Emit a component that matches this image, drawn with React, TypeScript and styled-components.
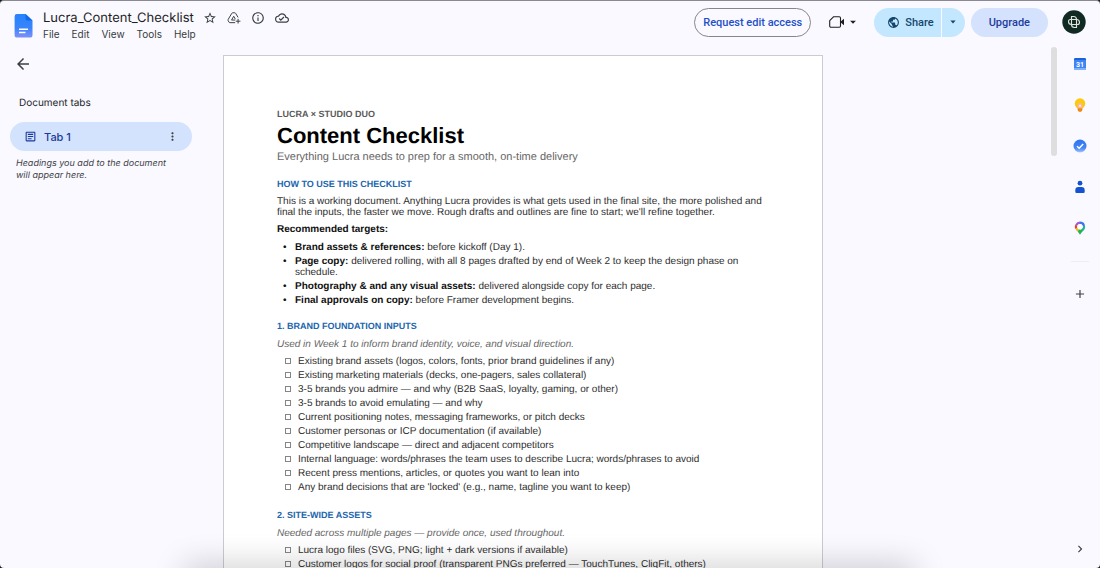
import React from "react";
import styled, { createGlobalStyle } from "styled-components";
import {
  MdAdd,
  MdArrowBack,
  MdArrowDropDown,
  MdChevronRight,
  MdMoreVert,
  MdOutlineArticle,
  MdOutlineCloudDone,
  MdOutlineInfo,
  MdPublic,
  MdStarBorder,
} from "react-icons/md";

const ui = `Inter, Roboto, "Liberation Sans", sans-serif`;
const control = `Roboto, Inter, sans-serif`;

const GlobalStyle = createGlobalStyle`
  * { box-sizing: border-box; }
  body { margin: 0; background: #17171a; }
  button { font: inherit; color: inherit; background: none; border: 0; padding: 0; cursor: pointer; }
  h1, h2, p, ul { margin: 0; padding: 0; }
`;

const Window = styled.div`
  position: relative;
  display: flex;
  flex-direction: column;
  height: 100vh;
  overflow: hidden;
  border-top: 1px solid #8b8a92;
  border-radius: 4px;
  background: #f9f9ff;
  color: #2b2d31;
  font-family: ${ui};
  text-rendering: geometricPrecision;
`;

const Header = styled.header`
  display: flex;
  align-items: center;
  flex: none;
  height: 42px;
  padding: 0 14px;
`;

const Logo = styled.a`
  margin-top: 6px;
  svg { display: block; }
`;

const TitleBlock = styled.div`
  display: flex;
  flex-direction: column;
  flex: 1;
  margin: 6px 0 0 10px;
`;

const TitleRow = styled.div`
  display: flex;
  align-items: center;
  height: 18px;
`;

const FileName = styled.span`
  font-size: 13px;
  line-height: 18px;
  color: #1f1f1f;
`;

const TitleActions = styled.div`
  display: flex;
  gap: 10px;
  margin-left: 9px;
`;

const IconButton = styled.button<{ $size?: number }>`
  display: flex;
  align-items: center;
  justify-content: center;
  width: ${(p) => p.$size ?? 14}px;
  height: ${(p) => p.$size ?? 14}px;
  color: #3c4043;
  svg { display: block; width: 100%; height: 100%; }
`;

const Menu = styled.nav`
  display: flex;
  gap: 12px;
  height: 15px;
  font-size: 10px;
  line-height: 15px;
  color: #3a3c40;
`;

const Actions = styled.div`
  display: flex;
  align-items: center;
  font-family: ${control};
`;

const Pill = styled.button<{ $tone: "outline" | "soft" }>`
  height: 29px;
  padding: 0 ${(p) => (p.$tone === "outline" ? 8 : 18)}px;
  border-radius: 15px;
  border: ${(p) => (p.$tone === "outline" ? "1px solid #85868c" : "0")};
  background: ${(p) => (p.$tone === "outline" ? "transparent" : "#d5e2fd")};
  color: ${(p) => (p.$tone === "outline" ? "#1f50c8" : "#1c3d9c")};
  font-size: 11px;
  font-weight: 500;
  white-space: nowrap;
`;

const MeetButton = styled.button`
  display: flex;
  align-items: center;
  gap: 1px;
  margin: 0 14px 0 18px;
  color: #1f1f1f;
`;

const ShareGroup = styled.div`
  display: flex;
  gap: 1px;
  height: 29px;
  margin-right: 6px;
  color: #14466e;
`;

const ShareMain = styled.button`
  display: flex;
  align-items: center;
  gap: 5px;
  padding: 0 7px 0 13px;
  border-radius: 15px 0 0 15px;
  background: #c3e7fe;
  font-size: 11px;
  font-weight: 500;
`;

const ShareMore = styled.button`
  display: flex;
  align-items: center;
  justify-content: center;
  width: 23px;
  border-radius: 0 15px 15px 0;
  background: #c3e7fe;
`;

const Avatar = styled.button`
  width: 24px;
  height: 24px;
  margin-left: 14px;
  svg { display: block; }
`;

const Main = styled.main`
  display: grid;
  grid-template-columns: minmax(0, 1fr) minmax(0, 600px) minmax(0, 1fr) 54px;
  flex: 1;
  min-height: 0;
`;

const Sidebar = styled.aside`
  padding: 12px 31px 0 10px;
`;

const BackRow = styled.div`
  padding-left: 4px;
`;

const SideTitle = styled.h2`
  margin: 23px 9px 12px;
  font-size: 10px;
  font-weight: 400;
  line-height: 14px;
  color: #24262a;
`;

const TabRow = styled.div`
  display: flex;
  align-items: center;
  height: 29px;
  padding: 0 13px 0 14px;
  border-radius: 15px;
  background: #d3e3fd;
`;

const TabButton = styled.button`
  display: flex;
  align-items: center;
  flex: 1;
  gap: 7px;
  font-size: 11px;
  font-weight: 500;
  color: #1b3a9a;
`;

const Hint = styled.p`
  margin: 7px 16px 0 6px;
  font-size: 9px;
  font-style: italic;
  line-height: 12px;
  color: #3f4146;
`;

const Page = styled.article`
  margin-top: 12px;
  padding: 52px 53px 0;
  overflow: hidden;
  border: 1px solid #cbccd3;
  border-bottom: 0;
  background: #ffffff;
  color: #2e2e2e;
  font-family: "Liberation Sans", Arial, sans-serif;
  font-size: 10px;
  line-height: 11px;
`;

const Eyebrow = styled.p`
  font-size: 9px;
  font-weight: 700;
  line-height: 12px;
  color: #5a5a5a;
`;

const DocTitle = styled.h1`
  margin-top: 3px;
  font-size: 22px;
  line-height: 26px;
  color: #000000;
`;

const Subtitle = styled.p`
  margin-top: 2px;
  font-size: 11px;
  line-height: 13px;
  color: #666666;
`;

const SectionTitle = styled.h2`
  margin-top: 14px;
  font-size: 9px;
  line-height: 12px;
  color: #2166ae;
`;

const Intro = styled.p`
  margin-top: 6px;
`;

const Lead = styled.p`
  margin-top: 6px;
  font-weight: 700;
  color: #111111;
`;

const Note = styled.p`
  margin-top: 7px;
  font-style: italic;
  line-height: 12px;
  color: #666666;
`;

const Bullets = styled.ul`
  margin-top: 7px;
  list-style: none;
`;

const Bullet = styled.li`
  display: flex;
  margin-bottom: 3px;
  padding-left: 6px;
  &::before { content: "•"; flex: none; width: 12px; color: #111111; }
  b { color: #111111; }
`;

const Checks = styled.ul`
  margin-top: 3px;
  padding: 0 0 1px 8px;
  list-style: none;
`;

const CheckLabel = styled.label`
  display: flex;
  align-items: center;
  gap: 7px;
  height: 14px;
  white-space: nowrap;
`;

const Box = styled.input`
  appearance: none;
  width: 6px;
  height: 6px;
  margin: 0;
  border: 1px solid #858585;
  &:checked { background: #2166ae; }
`;

const Rail = styled.div`
  grid-column: 4;
  display: flex;
  justify-content: space-between;
  padding: 4px 11px 12px 5px;
`;

const ScrollThumb = styled.div`
  width: 6px;
  height: 109px;
  border-radius: 3px;
  background: #dededf;
`;

const Apps = styled.nav`
  display: flex;
  flex-direction: column;
  align-items: center;
  gap: 27px;
  padding-top: 10px;
`;

const Divider = styled.hr`
  width: 18px;
  margin: -1px 0 -2px;
  border: 0;
  border-top: 1px solid #ededf3;
`;

const RailEnd = styled.div`
  margin-top: auto;
`;

const DockShadow = styled.div`
  position: absolute;
  left: 17%;
  right: 17%;
  top: 100%;
  height: 20px;
  box-shadow: 0 0 32px 2px rgba(0, 0, 0, 0.22);
  pointer-events: none;
`;

const DocsLogo = () => (
  <svg width="19" height="25" viewBox="0 0 19 25">
    <defs>
      <linearGradient id="docs" x1="0" y1="0" x2="0" y2="1">
        <stop offset="0" stopColor="#2483fd" />
        <stop offset=".6" stopColor="#3b84fb" />
        <stop offset="1" stopColor="#8090f8" />
      </linearGradient>
    </defs>
    <path d="M3 1h8.600L18.500 7.500V22a2.600 2.600 0 0 1-2.600 2.600H3.200A2.600 2.600 0 0 1 .600 22V3.400A2.400 2.400 0 0 1 3 1z" fill="url(#docs)" />
    <path d="M11.600 1l6.900 6.500h-5a1.900 1.900 0 0 1-1.900-1.900z" fill="#1268e8" />
    <path d="M5 16.200h9M5 19.600h6.500" stroke="#fff" strokeWidth="1.500" />
  </svg>
);

const DriveShortcutIcon = () => (
  <svg viewBox="0 0 24 24" fill="none" stroke="currentColor" strokeWidth="1.700" strokeLinejoin="round">
    <path d="M14 20H5a2 2 0 0 1-1.700-1L2 16.500a2 2 0 0 1 0-2L8.200 4a2 2 0 0 1 1.700-1h3.200a2 2 0 0 1 1.700 1l4.200 7" />
    <path d="M14 15.500H7.800l3.700-6.500 2.800 5" />
    <path d="M19 13.500v8M15 17.500h8" />
  </svg>
);

const CameraIcon = () => (
  <svg width="16" height="14" viewBox="0 0 16 14" fill="none">
    <path d="M4.700 1.700h5.600a1.200 1.200 0 0 1 1.200 1.200v8.200a1.200 1.200 0 0 1-1.200 1.200H1.900A1.200 1.200 0 0 1 .700 11.100V5.700z" stroke="currentColor" strokeWidth="1.100" strokeLinejoin="round" />
    <path d="M12 6.200L15 3.800v6.400l-3-2.400z" fill="currentColor" />
  </svg>
);

const CaretIcon = () => (
  <svg width="6" height="4" viewBox="0 0 6 4">
    <path d="M.400.500h5.200L3 3.400z" fill="currentColor" />
  </svg>
);

const AvatarIcon = () => (
  <svg width="24" height="24" viewBox="0 0 24 24" fill="none">
    <circle cx="12" cy="12" r="11.700" fill="#122b22" />
    <g stroke="#dfe6e1" strokeWidth="1.100">
      <path d="M9.500 6.500h2a3 3 0 0 1 3 3v5h-5a3 3 0 0 1-3-3v0a2 2 0 0 1 2-2h1z" />
      <path d="M14.500 17.500h-2a3 3 0 0 1-3-3v-5h5a3 3 0 0 1 3 3v0a2 2 0 0 1-2 2h-1z" />
      <path d="M9.500 6.500v3M14.500 14.500v3" />
    </g>
  </svg>
);

const CalendarIcon = () => (
  <svg viewBox="0 0 14 14">
    <rect x="1" y="1" width="12" height="12" rx="1.500" fill="#3f83f5" />
    <path d="M1 3V2.500A1.500 1.500 0 0 1 2.500 1h9A1.500 1.500 0 0 1 13 2.500V3z" fill="#1b62d8" />
    <path d="M1 11h12v.500a1.500 1.500 0 0 1-1.500 1.500h-9A1.500 1.500 0 0 1 1 11.500z" fill="#7db2fb" />
    <text x="7" y="9.800" textAnchor="middle" fontSize="7" fontWeight="700" fontFamily="Roboto, sans-serif" fill="#fff">31</text>
  </svg>
);

const KeepIcon = () => (
  <svg viewBox="0 0 14 14">
    <circle cx="7" cy="5.500" r="5.200" fill="#fdc90a" />
    <path d="M4.600 8a2.500 2.500 0 1 1 4.800 0v2.500H4.600z" fill="#f8b6a1" />
    <circle cx="7" cy="7.800" r="1" fill="#fff3e8" />
    <path d="M4.600 10.300h4.800v1.200a2.400 2.400 0 0 1-4.800 0z" fill="#ee8a16" />
  </svg>
);

const TasksIcon = () => (
  <svg viewBox="0 0 14 14">
    <defs>
      <linearGradient id="tasks" x1="0" y1="0" x2="0" y2="1">
        <stop offset="0" stopColor="#2f74ee" />
        <stop offset=".65" stopColor="#4585f5" />
        <stop offset="1" stopColor="#a9c2fb" />
      </linearGradient>
    </defs>
    <circle cx="7" cy="7" r="6.500" fill="url(#tasks)" />
    <path d="M4 7.200l2.200 2.100 4-4.300" fill="none" stroke="#fff" strokeWidth="1.400" />
  </svg>
);

const ContactsIcon = () => (
  <svg viewBox="0 0 14 14" fill="#1552cf">
    <circle cx="7" cy="3.200" r="2.400" />
    <path d="M2.300 10.200A3.200 3.200 0 0 1 5.500 7h3a3.200 3.200 0 0 1 3.200 3.200v1.500a1.300 1.300 0 0 1-1.300 1.300H3.600a1.300 1.300 0 0 1-1.300-1.300z" />
  </svg>
);

const MapsIcon = () => (
  <svg viewBox="0 0 14 14" fill="none" strokeWidth="2.400">
    <path d="M7 13.800L3.300 8.500 7 9.500l3.700-1z" fill="#22b455" />
    <path d="M3.400 7.500A4 4 0 0 1 3.400 4" stroke="#e8433a" />
    <path d="M3.400 4A4 4 0 0 1 7 1.800" stroke="#a35bd6" />
    <path d="M7 1.800A4 4 0 0 1 10.900 5" stroke="#3979f2" />
    <path d="M10.900 5A4 4 0 0 1 9.200 9" stroke="#24b0a0" />
    <path d="M9.400 8.900A4 4 0 0 1 5.400 9.200" stroke="#22b84f" />
    <path d="M5.600 9.300A4 4 0 0 1 3.400 7.200" stroke="#f3b521" />
    <circle cx="7" cy="5.700" r="2.700" fill="#fff" />
  </svg>
);

const brandInputs = [
  "Existing brand assets (logos, colors, fonts, prior brand guidelines if any)",
  "Existing marketing materials (decks, one-pagers, sales collateral)",
  "3-5 brands you admire — and why (B2B SaaS, loyalty, gaming, or other)",
  "3-5 brands to avoid emulating — and why",
  "Current positioning notes, messaging frameworks, or pitch decks",
  "Customer personas or ICP documentation (if available)",
  "Competitive landscape — direct and adjacent competitors",
  "Internal language: words/phrases the team uses to describe Lucra; words/phrases to avoid",
  "Recent press mentions, articles, or quotes you want to lean into",
  "Any brand decisions that are 'locked' (e.g., name, tagline you want to keep)",
];

const siteAssets = [
  "Lucra logo files (SVG, PNG; light + dark versions if available)",
  "Customer logos for social proof (transparent PNGs preferred — TouchTunes, CliqFit, others)",
];

const targets = [
  ["Brand assets & references:", "before kickoff (Day 1)."],
  ["Page copy:", "delivered rolling, with all 8 pages drafted by end of Week 2 to keep the design phase on schedule."],
  ["Photography & and any visual assets:", "delivered alongside copy for each page."],
  ["Final approvals on copy:", "before Framer development begins."],
];

const sideApps = [
  ["Calendar", CalendarIcon],
  ["Keep", KeepIcon],
  ["Tasks", TasksIcon],
  ["Contacts", ContactsIcon],
  ["Maps", MapsIcon],
] as const;

const Checklist = ({ items }: { items: string[] }) => (
  <Checks>
    {items.map((item) => (
      <li key={item}>
        <CheckLabel>
          <Box type="checkbox" />
          {item}
        </CheckLabel>
      </li>
    ))}
  </Checks>
);

export default function App() {
  return (
    <>
      <GlobalStyle />
      <Window>
        <Header>
          <Logo href="#" aria-label="Docs home"><DocsLogo /></Logo>
          <TitleBlock>
            <TitleRow>
              <FileName>Lucra_Content_Checklist</FileName>
              <TitleActions>
                <IconButton aria-label="Star"><MdStarBorder /></IconButton>
                <IconButton aria-label="Add shortcut to Drive"><DriveShortcutIcon /></IconButton>
                <IconButton aria-label="Details"><MdOutlineInfo /></IconButton>
                <IconButton aria-label="Document status"><MdOutlineCloudDone /></IconButton>
              </TitleActions>
            </TitleRow>
            <Menu>
              {["File", "Edit", "View", "Tools", "Help"].map((m) => (
                <button key={m}>{m}</button>
              ))}
            </Menu>
          </TitleBlock>
          <Actions>
            <Pill $tone="outline">Request edit access</Pill>
            <MeetButton aria-label="Join a call">
              <CameraIcon />
              <MdArrowDropDown size={14} />
            </MeetButton>
            <ShareGroup>
              <ShareMain><MdPublic size={13} />Share</ShareMain>
              <ShareMore aria-label="Sharing options"><CaretIcon /></ShareMore>
            </ShareGroup>
            <Pill $tone="soft">Upgrade</Pill>
            <Avatar aria-label="Account"><AvatarIcon /></Avatar>
          </Actions>
        </Header>
        <Main>
          <Sidebar>
            <BackRow>
              <IconButton $size={18} aria-label="Close tabs"><MdArrowBack /></IconButton>
            </BackRow>
            <SideTitle>Document tabs</SideTitle>
            <TabRow>
              <TabButton><MdOutlineArticle size={13} />Tab 1</TabButton>
              <IconButton $size={13} aria-label="Tab options"><MdMoreVert /></IconButton>
            </TabRow>
            <Hint>Headings you add to the document will appear here.</Hint>
          </Sidebar>
          <Page>
            <Eyebrow>LUCRA × STUDIO DUO</Eyebrow>
            <DocTitle>Content Checklist</DocTitle>
            <Subtitle>Everything Lucra needs to prep for a smooth, on-time delivery</Subtitle>
            <SectionTitle>HOW TO USE THIS CHECKLIST</SectionTitle>
            <Intro>
              This is a working document. Anything Lucra provides is what gets used in the final site, the more polished and
              final the inputs, the faster we move. Rough drafts and outlines are fine to start; we'll refine together.
            </Intro>
            <Lead>Recommended targets:</Lead>
            <Bullets>
              {targets.map(([name, text]) => (
                <Bullet key={name}><span><b>{name}</b> {text}</span></Bullet>
              ))}
            </Bullets>
            <SectionTitle>1. BRAND FOUNDATION INPUTS</SectionTitle>
            <Note>Used in Week 1 to inform brand identity, voice, and visual direction.</Note>
            <Checklist items={brandInputs} />
            <SectionTitle>2. SITE-WIDE ASSETS</SectionTitle>
            <Note>Needed across multiple pages — provide once, used throughout.</Note>
            <Checklist items={siteAssets} />
          </Page>
          <Rail>
            <ScrollThumb />
            <Apps>
              {sideApps.map(([name, Icon]) => (
                <IconButton key={name} aria-label={name}><Icon /></IconButton>
              ))}
              <Divider />
              <IconButton aria-label="Get add-ons"><MdAdd /></IconButton>
              <RailEnd>
                <IconButton aria-label="Hide side panel"><MdChevronRight /></IconButton>
              </RailEnd>
            </Apps>
          </Rail>
        </Main>
        <DockShadow />
      </Window>
    </>
  );
}
